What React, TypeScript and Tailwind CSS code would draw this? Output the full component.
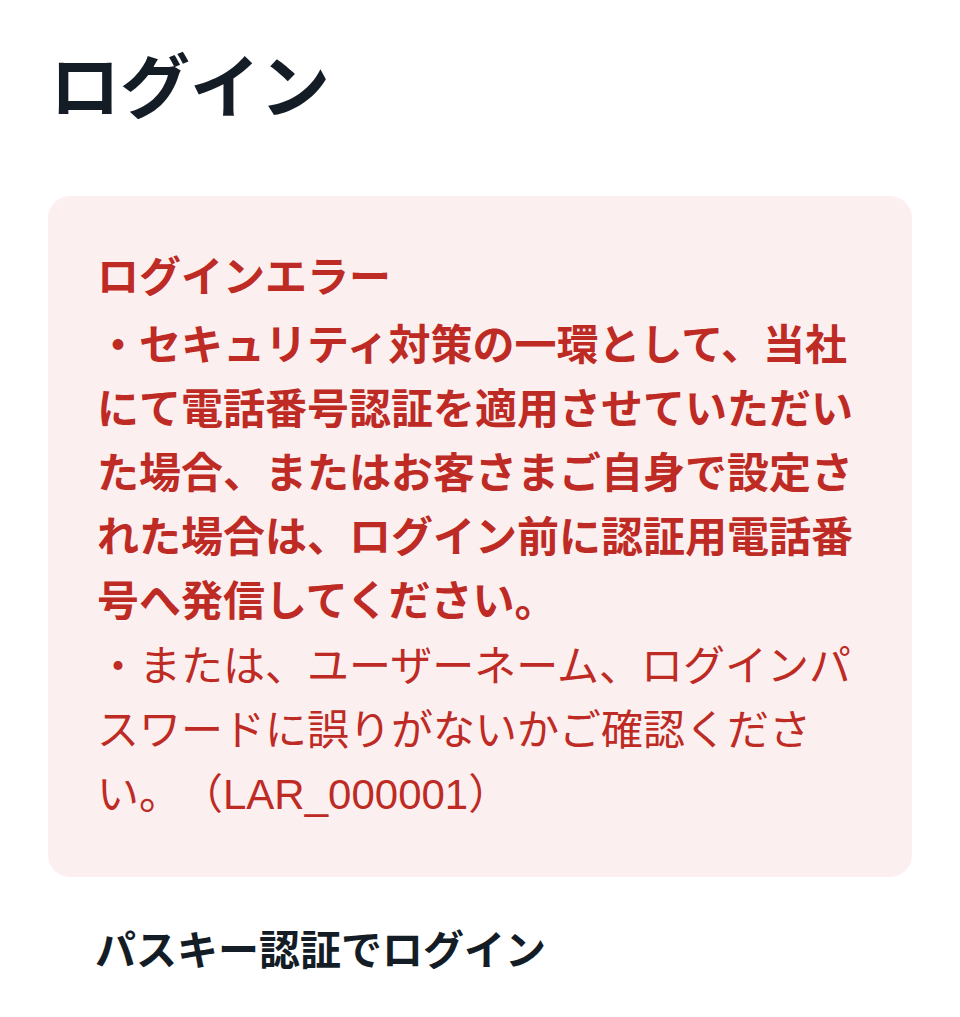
import React from 'react';

const font = { fontFamily: '"Noto Sans CJK JP", "Noto Sans", sans-serif' };
// Latin glyphs in the error code use an Arial-like face, CJK falls back to Noto
const mixedFont = { fontFamily: '"Liberation Sans", "Noto Sans CJK JP", sans-serif' };

export default function App() {
  return (
    <div className="min-h-screen bg-white px-[48px] pt-[30px]" style={font}>
      {/* Page title */}
      <h1 className="text-[70px] font-bold leading-[106px] text-[#141d26] pl-[2px]">ログイン</h1>

      {/* Error box */}
      <div className="mt-[60px] rounded-[22px] bg-[#fcefef] pl-[49px] pr-[52px] pt-[46px] pb-[50px] text-[42px] leading-[64px] text-[#be2a24] [text-spacing-trim:space-all]">
        <p className="font-bold mb-[4px]">ログインエラー</p>
        <p className="font-bold">
          ・セキュリティ対策の一環として、当社にて電話番号認証を適用させていただいた場合、またはお客さまご自身で設定された場合は、ログイン前に認証用電話番号へ発信してください。
        </p>
        <p className="font-normal pt-[5px]" style={mixedFont}>
          ・または、ユーザーネーム、ログインパスワードに誤りがないかご確認ください。（LAR_000001）
        </p>
      </div>

      {/* Passkey login */}
      <h2 className="mt-[38px] pl-[47px] text-[41px] font-bold leading-[64px] text-[#141d26]">パスキー認証でログイン</h2>
    </div>
  );
}
